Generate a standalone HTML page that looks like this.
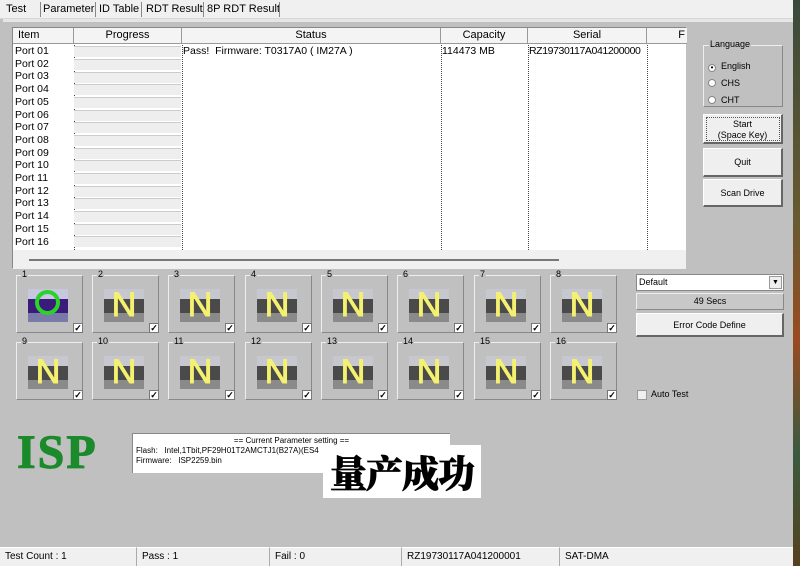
<!DOCTYPE html>
<html><head><meta charset="utf-8"><style>
*{box-sizing:border-box;margin:0;padding:0}
body{width:800px;height:566px;overflow:hidden;background:#c0c0c0;font-family:"Liberation Sans",Arial,sans-serif;font-size:11px;color:#000;position:relative}
.a{position:absolute}
.tabs{left:0;top:0;width:793px;height:19px;background:#f0f0f0;border-bottom:1px solid #d8d8d8}
.tab{position:absolute;top:3px;font-size:11px}
.sep{position:absolute;top:2px;width:1px;height:15px;background:#888}
.list{left:12px;top:27px;width:674px;height:241px;background:#fff;border-top:1px solid #888;border-left:1px solid #888}
.hd{position:absolute;top:0;height:16px;border-right:1px solid #999;border-bottom:1px solid #999;background:#f4f4f4;text-align:center;font-size:11px;line-height:15px}
.row{position:absolute;left:2px;font-size:10.5px;line-height:12.7px}
.pb{position:absolute;left:61px;width:107px;height:11px;background:#eeeeee;border-top:1px solid #ccc}
.vd{position:absolute;top:17px;height:207px;border-left:1px dotted #444}
.btn{background:#efefef;border:1px solid #fff;border-right:2px solid #666;border-bottom:2px solid #666;text-align:center;font-size:9px}
.tile{position:absolute;width:67px;height:58px;border:1px solid #eee;border-right-color:#888;border-bottom-color:#888}
.tl{position:absolute;top:-7px;left:4px;background:#c0c0c0;font-size:9px;padding:0 1px}
.ic{position:absolute;left:11px;top:13px;width:40px;height:33px;background:linear-gradient(#c7c7cf 0,#c7c7cf 30%,#4a4a4a 30%,#4a4a4a 72%,#8a8a8a 72%)}
.ic span{position:absolute;left:0;width:40px;top:-3px;text-align:center;font-size:34px;color:#f4f070;line-height:38px;-webkit-text-stroke:1px #f4f070}
.cb{position:absolute;right:-1px;bottom:-1px;width:10px;height:10px;background:#fff;border:1px solid #777;font-size:9px;line-height:8px;text-align:center;font-weight:bold}
.sb{position:absolute;top:547px;height:19px;background:#f0f0f0;border-top:1px solid #fff;font-size:10px;line-height:17px;padding-left:5px;border-right:1px solid #aaa}
</style></head><body>
<div class="a" style="left:793px;top:0;width:7px;height:566px;background:linear-gradient(#3a4a3a,#6a5a30 40%,#9a4a20 60%,#3a5a40 80%,#554020)"></div>
<div class="a tabs">
<div class="tab" style="left:6px">Test</div>
<div class="sep" style="left:40px"></div><div class="tab" style="left:43px">Parameter</div>
<div class="sep" style="left:95px"></div><div class="tab" style="left:99px">ID Table</div>
<div class="sep" style="left:141px"></div><div class="tab" style="left:146px">RDT Result</div>
<div class="sep" style="left:203px"></div><div class="tab" style="left:207px">8P RDT Result</div>
<div class="sep" style="left:279px"></div>
</div>
<div class="a" style="left:3px;top:19px;width:790px;height:3px;background:#e6e6e6"></div>
<div class="a list">
<div class="hd" style="left:0;width:61px;text-align:left;padding-left:5px">Item</div>
<div class="hd" style="left:61px;width:108px">Progress</div>
<div class="hd" style="left:169px;width:259px">Status</div>
<div class="hd" style="left:428px;width:87px">Capacity</div>
<div class="hd" style="left:515px;width:119px">Serial</div>
<div class="hd" style="left:634px;width:40px;border-right:0;text-align:right;padding-right:2px">F</div>
<div class="vd" style="left:61px"></div><div class="vd" style="left:169px"></div><div class="vd" style="left:428px"></div><div class="vd" style="left:515px"></div><div class="vd" style="left:634px"></div>
<div class="row" style="top:17px">Port 01<br>Port 02<br>Port 03<br>Port 04<br>Port 05<br>Port 06<br>Port 07<br>Port 08<br>Port 09<br>Port 10<br>Port 11<br>Port 12<br>Port 13<br>Port 14<br>Port 15<br>Port 16</div>
<div class="pb" style="top:18px"></div><div class="pb" style="top:31px"></div><div class="pb" style="top:44px"></div><div class="pb" style="top:56px"></div><div class="pb" style="top:69px"></div><div class="pb" style="top:82px"></div><div class="pb" style="top:94px"></div><div class="pb" style="top:107px"></div><div class="pb" style="top:120px"></div><div class="pb" style="top:132px"></div><div class="pb" style="top:145px"></div><div class="pb" style="top:158px"></div><div class="pb" style="top:170px"></div><div class="pb" style="top:183px"></div><div class="pb" style="top:196px"></div><div class="pb" style="top:208px"></div>
<div class="row" style="top:17px;left:170px">Pass!&nbsp; Firmware: T0317A0 ( IM27A )</div>
<div class="row" style="top:17px;left:429px">114473 MB</div>
<div class="row" style="top:17px;left:516px;letter-spacing:-0.4px">RZ19730117A041200000</div>
<div class="a" style="left:0;top:222px;width:673px;height:19px;background:#f0f0f0"></div>
<div class="a" style="left:16px;top:231px;width:530px;height:2px;background:#777"></div>
</div>
<div class="a" style="left:703px;top:45px;width:80px;height:62px;border:1px solid #eee;border-right-color:#888;border-bottom-color:#888"></div>
<div class="a" style="left:709px;top:39px;background:#c0c0c0;font-size:9px;padding:0 1px">Language</div>
<div class="a" style="left:708px;top:58px;font-size:9px;line-height:17px">
<span style="display:inline-block;width:8px;height:8px;border-radius:50%;background:#fff;border:1px solid #888;vertical-align:-1px;text-align:center;font-size:8px;line-height:6px">•</span>&nbsp; English<br>
<span style="display:inline-block;width:8px;height:8px;border-radius:50%;background:#fff;border:1px solid #888;vertical-align:-1px"></span>&nbsp; CHS<br>
<span style="display:inline-block;width:8px;height:8px;border-radius:50%;background:#fff;border:1px solid #888;vertical-align:-1px"></span>&nbsp; CHT</div>
<div class="a btn" style="left:703px;top:114px;width:80px;height:30px;padding-top:4px;line-height:11px;outline:1px dotted #555;outline-offset:-4px">Start<br>(Space Key)</div>
<div class="a btn" style="left:703px;top:148px;width:80px;height:29px;line-height:27px">Quit</div>
<div class="a btn" style="left:703px;top:179px;width:80px;height:28px;line-height:26px">Scan Drive</div>

<div class="a tile" style="left:16px;top:275px"><div class="tl">1</div><div class="ic" style="background:linear-gradient(#c7c7e0 0,#c7c7e0 30%,#3a1a7a 30%,#3a1a7a 72%,#7a7aa8 72%)"><div style="position:absolute;left:7px;top:1px;width:25px;height:25px;border:4px solid #2ad22a;border-radius:50%"></div></div><div class="cb">✓</div></div>
<div class="a tile" style="left:92px;top:275px"><div class="tl">2</div><div class="ic"><span>N</span></div><div class="cb">✓</div></div>
<div class="a tile" style="left:168px;top:275px"><div class="tl">3</div><div class="ic"><span>N</span></div><div class="cb">✓</div></div>
<div class="a tile" style="left:245px;top:275px"><div class="tl">4</div><div class="ic"><span>N</span></div><div class="cb">✓</div></div>
<div class="a tile" style="left:321px;top:275px"><div class="tl">5</div><div class="ic"><span>N</span></div><div class="cb">✓</div></div>
<div class="a tile" style="left:397px;top:275px"><div class="tl">6</div><div class="ic"><span>N</span></div><div class="cb">✓</div></div>
<div class="a tile" style="left:474px;top:275px"><div class="tl">7</div><div class="ic"><span>N</span></div><div class="cb">✓</div></div>
<div class="a tile" style="left:550px;top:275px"><div class="tl">8</div><div class="ic"><span>N</span></div><div class="cb">✓</div></div>
<div class="a tile" style="left:16px;top:342px"><div class="tl">9</div><div class="ic"><span>N</span></div><div class="cb">✓</div></div>
<div class="a tile" style="left:92px;top:342px"><div class="tl">10</div><div class="ic"><span>N</span></div><div class="cb">✓</div></div>
<div class="a tile" style="left:168px;top:342px"><div class="tl">11</div><div class="ic"><span>N</span></div><div class="cb">✓</div></div>
<div class="a tile" style="left:245px;top:342px"><div class="tl">12</div><div class="ic"><span>N</span></div><div class="cb">✓</div></div>
<div class="a tile" style="left:321px;top:342px"><div class="tl">13</div><div class="ic"><span>N</span></div><div class="cb">✓</div></div>
<div class="a tile" style="left:397px;top:342px"><div class="tl">14</div><div class="ic"><span>N</span></div><div class="cb">✓</div></div>
<div class="a tile" style="left:474px;top:342px"><div class="tl">15</div><div class="ic"><span>N</span></div><div class="cb">✓</div></div>
<div class="a tile" style="left:550px;top:342px"><div class="tl">16</div><div class="ic"><span>N</span></div><div class="cb">✓</div></div>

<div class="a" style="left:636px;top:274px;width:148px;height:17px;background:#fff;border:1px solid #888;font-size:9px;line-height:15px;padding-left:2px">Default<div style="position:absolute;right:1px;top:1px;width:13px;height:13px;background:#eee;border:1px solid #999;font-size:7px;text-align:center;line-height:12px">▼</div></div>
<div class="a" style="left:636px;top:293px;width:148px;height:17px;background:#c8c8c8;border:1px solid #eee;border-right-color:#888;border-bottom-color:#888;text-align:center;font-size:9px;line-height:15px">49 Secs</div>
<div class="a btn" style="left:636px;top:313px;width:148px;height:24px;line-height:22px">Error Code Define</div>
<div class="a" style="left:637px;top:390px;width:10px;height:10px;background:#f0f0f0;border:1px solid #999"></div>
<div class="a" style="left:651px;top:389px;font-size:9px">Auto Test</div>

<div class="a" style="left:17px;top:425px;font-family:'Liberation Serif',serif;font-weight:bold;font-size:48px;color:#1a8a2a;letter-spacing:2px;-webkit-text-stroke:1px #1a8a2a">ISP</div>
<div class="a" style="left:132px;top:433px;width:318px;height:40px;background:#fff;border-top:1px solid #888;border-left:1px solid #888;font-size:8px;line-height:10px;padding:2px 3px">
<div style="text-align:center">== Current Parameter setting ==</div>
<div>Flash:&nbsp;&nbsp; Intel,1Tbit,PF29H01T2AMCTJ1(B27A)(ES4</div>
<div>Firmware:&nbsp;&nbsp; ISP2259.bin</div></div>
<div class="a" style="left:323px;top:445px;width:158px;height:53px;background:#fff;font-family:'Noto Serif CJK SC',serif;font-weight:900;font-size:37px;line-height:53px;text-align:center;letter-spacing:-1px;-webkit-text-stroke:0.8px #000">量产成功</div>

<div class="sb" style="left:0;width:137px">Test Count : 1</div>
<div class="sb" style="left:137px;width:133px">Pass : 1</div>
<div class="sb" style="left:270px;width:132px">Fail : 0</div>
<div class="sb" style="left:402px;width:158px">RZ19730117A041200001</div>
<div class="sb" style="left:560px;width:233px;border-right:0">SAT-DMA</div>
</body></html>
